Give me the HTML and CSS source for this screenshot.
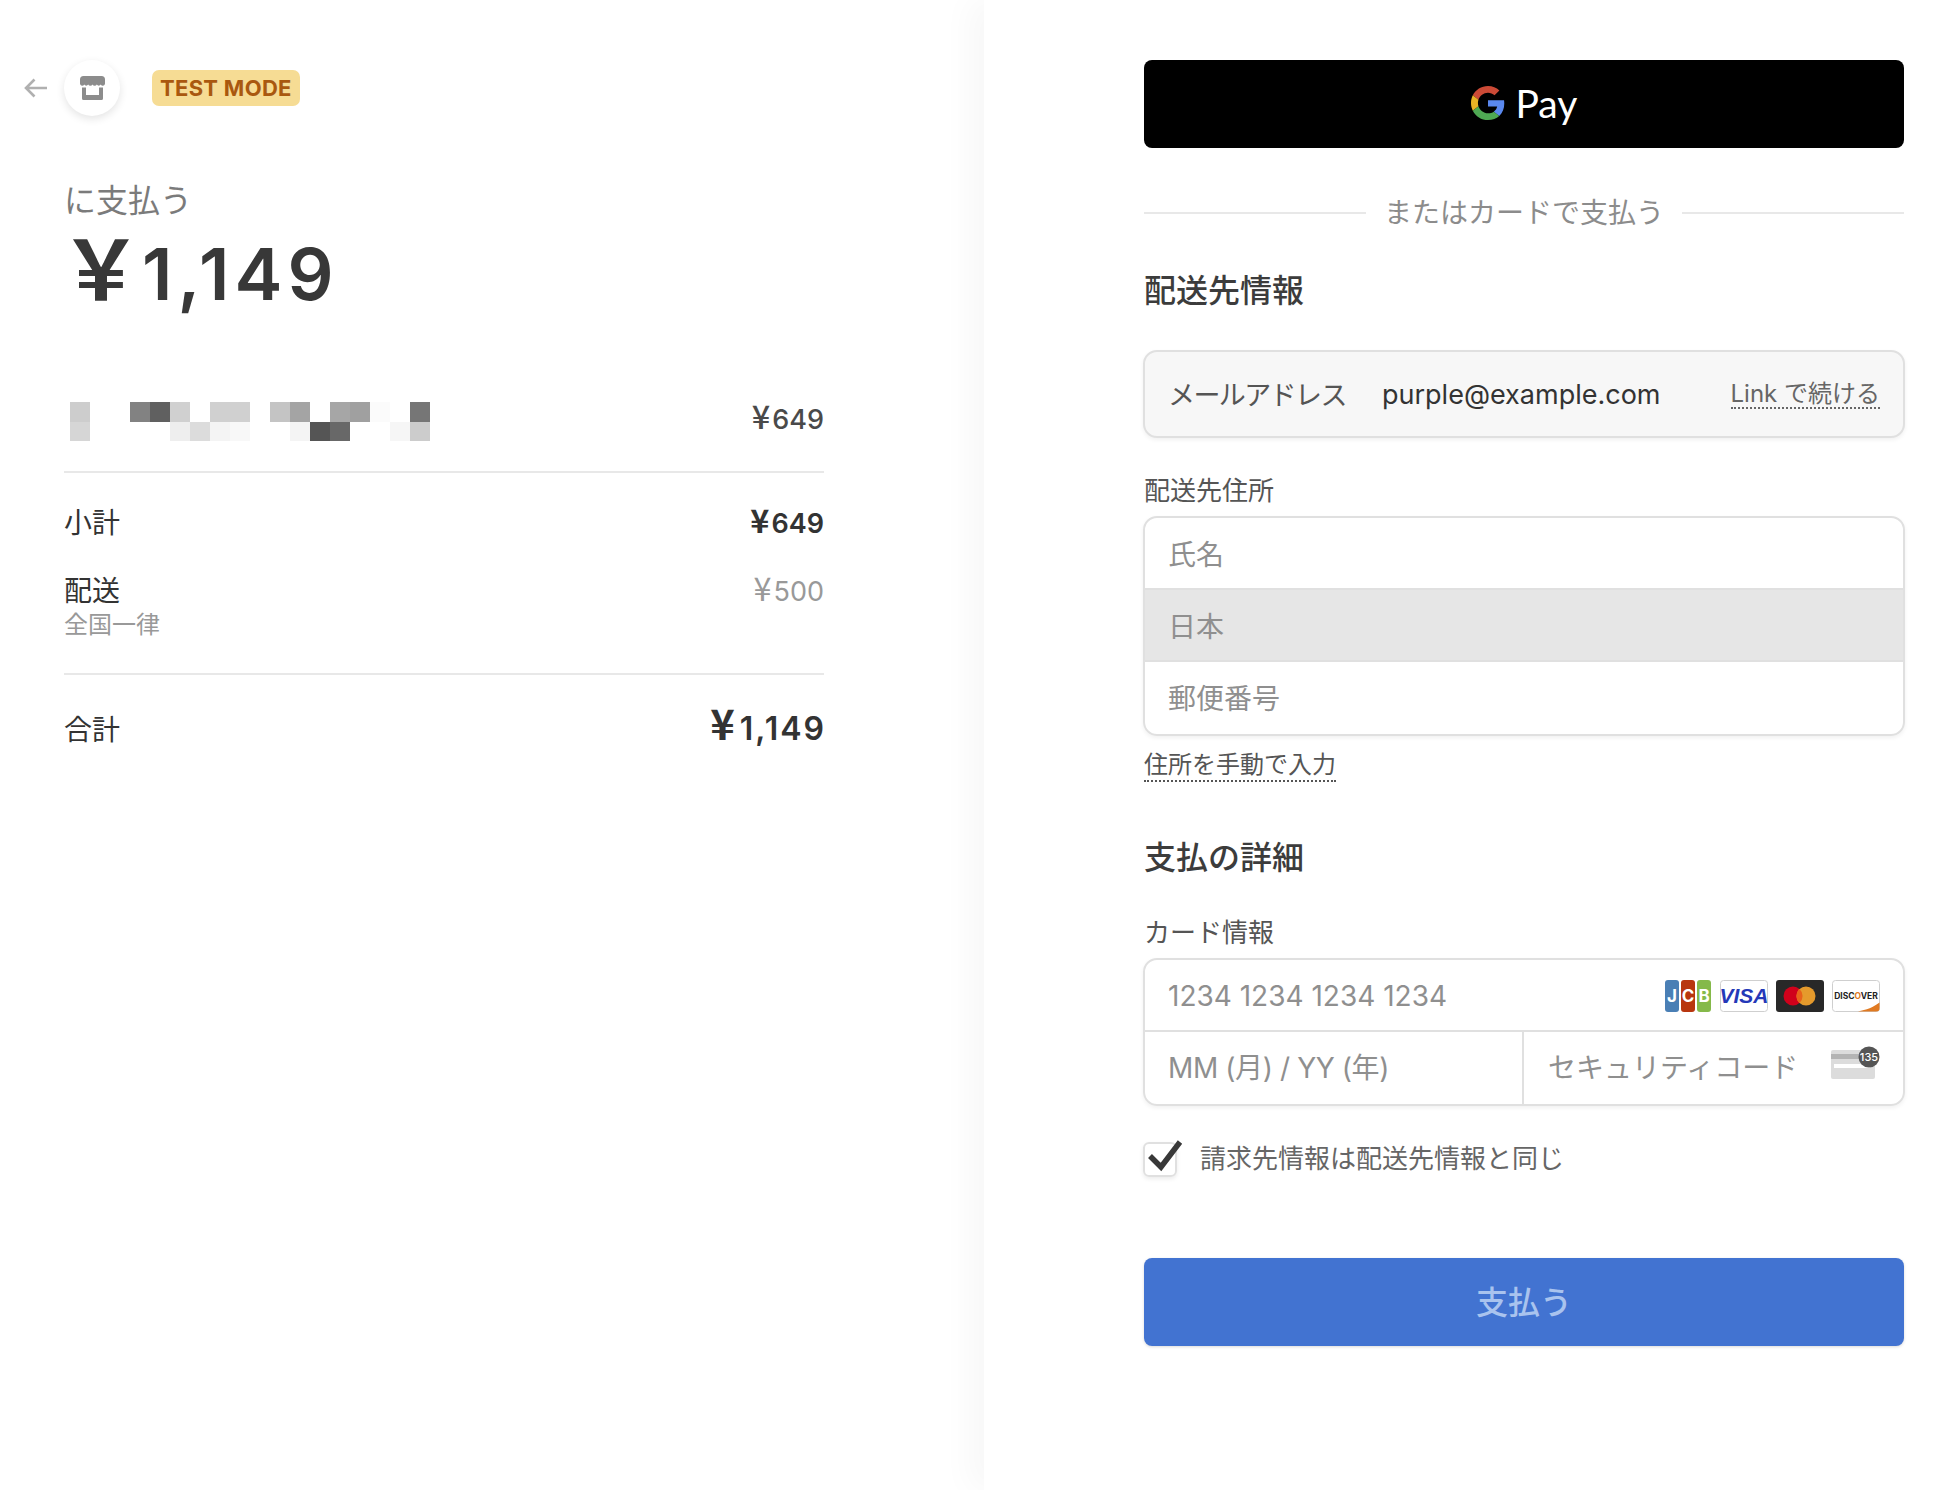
FILE: index.html
```html
<!DOCTYPE html>
<html lang="ja">
<head>
<meta charset="utf-8">
<title>支払う</title>
<link rel="stylesheet" href="styles.css">
</head>
<body>
<div class="page">
  <aside class="summary">
    <header class="topbar">
      <svg class="back" viewBox="0 0 24 20" width="24" height="20"><path d="M23 10H2M10.500 1.500 2 10l8.500 8.500" fill="none" stroke="#b0b0b0" stroke-width="2.600"/></svg>
      <div class="store">
        <svg viewBox="0 0 25 25" width="25" height="25"><path d="M3.500 0h18A3.500 3.500 0 0 1 25 3.500v4.300a2.200 2.200 0 0 1-4.200.700 2.300 2.300 0 0 1-4 0 2.400 2.400 0 0 1-4.300 0 2.400 2.400 0 0 1-4.300 0 2.300 2.300 0 0 1-4 0A2.200 2.200 0 0 1 0 7.800V3.500A3.500 3.500 0 0 1 3.500 0z" fill="#8c8c8c"/><path d="M2 11.500h4V19h13v-7.500h4v11a1.500 1.500 0 0 1-1.500 1.500h-18A1.500 1.500 0 0 1 2 22.500z" fill="#8c8c8c"/></svg>
      </div>
      <span class="badge">TEST MODE</span>
    </header>
    <div class="pay-to">に支払う</div>
    <div class="amount"><span class="yen-big">&#xFFE5;</span>1,149</div>
    <div class="item">
      <svg class="pixels" width="360" height="39" viewBox="0 0 360 39">
        <rect x="0" y="0" width="20" height="20" fill="#cdcdcd"/><rect x="60" y="0" width="20" height="20" fill="#828282"/><rect x="80" y="0" width="20" height="20" fill="#606060"/><rect x="100" y="0" width="20" height="20" fill="#d0d0d0"/><rect x="140" y="0" width="40" height="20" fill="#d0d0d0"/><rect x="200" y="0" width="20" height="20" fill="#c4c4c4"/><rect x="220" y="0" width="20" height="20" fill="#a4a4a4"/><rect x="260" y="0" width="20" height="20" fill="#a6a6a6"/><rect x="280" y="0" width="20" height="20" fill="#a0a0a0"/><rect x="300" y="0" width="20" height="20" fill="#fbfbfb"/><rect x="340" y="0" width="20" height="20" fill="#767676"/>
        <rect x="0" y="20" width="20" height="19" fill="#d6d6d6"/><rect x="100" y="20" width="20" height="19" fill="#eeeeee"/><rect x="120" y="20" width="20" height="19" fill="#dcdcdc"/><rect x="140" y="20" width="20" height="19" fill="#f4f4f4"/><rect x="160" y="20" width="20" height="19" fill="#f8f8f8"/><rect x="220" y="20" width="20" height="19" fill="#f4f4f4"/><rect x="240" y="20" width="20" height="19" fill="#555555"/><rect x="260" y="20" width="20" height="19" fill="#686868"/><rect x="320" y="20" width="20" height="19" fill="#f6f6f6"/><rect x="340" y="20" width="20" height="19" fill="#cccccc"/>
      </svg>
      <span class="item-price"><span class="yen">¥</span>649</span>
    </div>
    <div class="row subtotal"><span>小計</span><strong><span class="yen">¥</span>649</strong></div>
    <div class="row shipping">
      <div><div>配送</div><div class="ship-note">全国一律</div></div>
      <span class="ship-price"><span class="yen">¥</span>500</span>
    </div>
    <div class="row total"><span>合計</span><strong><span class="yen">¥</span>1,149</strong></div>
  </aside>

  <main class="checkout">
    <button class="gpay" type="button">
      <svg viewBox="0 0 48 48" width="34" height="34"><path fill="#CB4A36" d="M24 9.500c3.540 0 6.710 1.220 9.210 3.600l6.850-6.850C35.900 2.380 30.470 0 24 0 14.620 0 6.510 5.380 2.560 13.220l7.980 6.190C12.430 13.720 17.740 9.500 24 9.500z"/><path fill="#5A88EE" d="M46.980 24.550c0-1.570-.15-3.090-.38-4.550H24v9.020h12.940c-.58 2.960-2.260 5.480-4.780 7.180l7.730 6c4.510-4.180 7.090-10.360 7.090-17.650z"/><path fill="#E8B325" d="M10.530 28.590c-.48-1.450-.76-2.990-.76-4.590s.27-3.140.76-4.590l-7.980-6.190C.92 16.460 0 20.120 0 24c0 3.880.92 7.540 2.560 10.780l7.970-6.190z"/><path fill="#4FA853" d="M24 48c6.480 0 11.930-2.130 15.890-5.810l-7.730-6c-2.150 1.450-4.920 2.300-8.160 2.300-6.260 0-11.570-4.220-13.470-9.910l-7.980 6.190C6.510 42.620 14.620 48 24 48z"/></svg>
      <span class="gpay-text">Pay</span>
    </button>
    <div class="or"><span>またはカードで支払う</span></div>
    <h2 class="heading ship-heading">配送先情報</h2>
    <div class="email">
      <span class="email-label">メールアドレス</span>
      <span class="email-value">purple@example.com</span>
      <a class="link-continue">Link で続ける</a>
    </div>
    <div class="label addr-label">配送先住所</div>
    <div class="fieldset">
      <div class="field">氏名</div>
      <div class="field field-disabled">日本</div>
      <div class="field field-last">郵便番号</div>
    </div>
    <a class="manual">住所を手動で入力</a>
    <h2 class="heading pay-heading">支払の詳細</h2>
    <div class="label card-label">カード情報</div>
    <div class="fieldset">
      <div class="field card-number">
        <span>1234 1234 1234 1234</span>
        <div class="brands">
          <svg width="48" height="32" viewBox="0 0 48 32"><rect x="1" width="14" height="32" rx="3" fill="#4a7fb5"/><rect x="17" width="14" height="32" rx="3" fill="#b8360f"/><rect x="33" width="14" height="32" rx="3" fill="#85b94a"/><text x="8" y="22" class="jcb">J</text><text x="24" y="22" class="jcb">C</text><text x="40" y="22" class="jcb">B</text></svg>
          <svg width="48" height="32" viewBox="0 0 48 32"><rect x=".5" y=".5" width="47" height="31" rx="3" fill="#fff" stroke="#cfcfcf"/><text x="24" y="23" class="visa">VISA</text></svg>
          <svg width="48" height="32" viewBox="0 0 48 32"><rect width="48" height="32" rx="3" fill="#282828"/><circle cx="17" cy="16" r="9.500" fill="#d0011b"/><circle cx="30" cy="16" r="9.500" fill="#e59a2c"/><path d="M23.500 9a9.500 9.500 0 0 1 0 14 9.500 9.500 0 0 1 0-14z" fill="#e8611a"/></svg>
          <svg width="48" height="32" viewBox="0 0 48 32"><rect x=".5" y=".5" width="47" height="31" rx="3" fill="#fff" stroke="#cfcfcf"/><path d="M26 31.500c8-1.500 16-4.500 21.500-9v6a3 3 0 0 1-3 3z" fill="#e07a22"/><text x="24" y="18.500" class="discover">DISC<tspan class="disc-o">O</tspan>VER</text></svg>
        </div>
      </div>
      <div class="card-split">
        <div class="field expiry">MM (月) / YY (年)</div>
        <div class="field cvc">
          <span>セキュリティコード</span>
          <svg class="cvc-icon" width="48" height="32" viewBox="0 0 48 32"><rect x="0" y="0" width="44" height="29" rx="2" fill="#dcdcdc"/><rect x="0" y="4" width="44" height="5" fill="#b4b4b4"/><rect x="3" y="14" width="36" height="4" fill="#fff"/><circle cx="38" cy="7" r="10.500" fill="#555"/><text x="38" y="11" class="cvc-text">135</text></svg>
        </div>
      </div>
    </div>
    <label class="check">
      <span class="box"><svg width="40" height="38" viewBox="0 0 40 38"><path d="M7 20l11 11L37 6" fill="none" stroke="#383838" stroke-width="5.500"/></svg></span>
      <span class="check-text">請求先情報は配送先情報と同じ</span>
    </label>
    <button class="pay" type="button">支払う</button>
  </main>
</div>
</body>
</html>
```
FILE: styles.css
```css
* { box-sizing: border-box; }
html, body { margin: 0; background: #fff; }
body {
  font-family: Inter, "Noto Sans CJK JP", sans-serif;
  color: #333;
  -webkit-font-smoothing: antialiased;
}
.page { display: flex; width: 1960px; height: 1490px; overflow: hidden; }

.summary { width: 984px; padding: 0 160px 0 64px; flex: none; }
.topbar { display: flex; align-items: center; height: 112px; padding-top: 64px; margin-left: -40px; }
.back { flex: none; }
.store {
  width: 56px; height: 56px; margin-left: 16px; border-radius: 50%;
  display: flex; align-items: center; justify-content: center;
  background: #fff; box-shadow: 0 3px 9px rgba(0, 0, 0, .11);
}
.badge {
  margin-left: 32px; height: 36px; padding: 0 8px; border-radius: 7px;
  background: #f6dc94; color: #a9580f; font-size: 22px; font-weight: 700;
  line-height: 36px; letter-spacing: .3px;
}
.pay-to { margin-top: 65px; font-size: 32px; line-height: 48px; color: #7b7b7b; }
.amount { margin-top: 7px; height: 84px; font-size: 72px; line-height: 84px; font-weight: 600; color: #383838; letter-spacing: 5px; }
.yen-big { font-size: 82px; line-height: 0; font-weight: 700; letter-spacing: 0; margin-left: -4px; }
.yen { font-family: "Noto Sans CJK JP", sans-serif; font-size: 1.2em; line-height: 0; letter-spacing: 0; margin-right: 2px; }
.item { display: flex; justify-content: space-between; align-items: flex-start; margin-top: 86px; height: 69px; padding-left: 6px; border-bottom: 2px solid #e8e8e8; box-sizing: content-box; }
.pixels { flex: none; }
.item-price { height: 35px; padding-top: 1px; font-size: 27px; line-height: 34px; font-weight: 500; color: #4a4a4a; }
.row { display: flex; justify-content: space-between; font-size: 28px; color: #333; }
.row strong { font-weight: 600; font-size: 27px; padding-top: 1px; }
.subtotal { margin-top: 32px; height: 36px; line-height: 36px; }
.shipping { margin-top: 32px; line-height: 36px; height: 100px; border-bottom: 2px solid #e8e8e8; box-sizing: content-box; }
.ship-note { font-size: 24px; line-height: 32px; color: #999; }
.ship-price { height: 36px; padding-top: 1px; font-size: 27px; color: #999; }
.total { margin-top: 36px; height: 38px; line-height: 38px; }
.row.total strong { font-size: 32px; letter-spacing: 2px; margin-right: -2px; padding-top: 0; line-height: 36px; }
.total .yen { font-size: 1.3em; margin-right: 5px; letter-spacing: 0; }

.checkout { flex: 1; padding: 60px 56px 0 160px; box-shadow: -15px 0 30px rgba(0, 0, 0, .03); }
.gpay {
  display: flex; align-items: center; justify-content: center; gap: 11px;
  width: 760px; height: 88px; border: 0; border-radius: 8px; background: #000; padding: 0 0 3px;
}
.gpay-text { font-family: Lato, sans-serif; color: #fff; font-size: 39px; line-height: 50px; }
.or { display: flex; align-items: center; gap: 18px; width: 760px; margin-top: 49px; height: 32px; color: #8c8c8c; font-size: 28px; line-height: 30px; }
.or::before, .or::after { content: ""; flex: 1; height: 2px; background: #e8e8e8; }
.heading { margin: 0; font-size: 32px; font-weight: 500; line-height: 40px; color: #3c3c3c; }
.ship-heading { margin-top: 42px; }
.email {
  display: flex; align-items: center; width: 762px; height: 88px; margin: 39px 0 0 -1px; padding: 0 23px;
  border: 2px solid #e0e0e0; border-radius: 14px; background: #f7f7f7;
  box-shadow: 0 2px 4px rgba(0, 0, 0, .06); font-size: 27px; color: #333;
}
.email-label { width: 214px; padding-bottom: 2px; color: #555; font-size: 27px; letter-spacing: -1.600px; }
.email-value { flex: 1; }
.link-continue { font-size: 24px; color: #666; border-bottom: 2px dotted #666; line-height: 27px; }
.label { font-size: 26px; line-height: 32px; color: #555; }
.addr-label { margin-top: 37px; }
.fieldset {
  width: 762px; margin: 9px 0 0 -1px; border: 2px solid #e0e0e0; border-radius: 14px; overflow: hidden;
  box-shadow: 0 2px 4px rgba(0, 0, 0, .06);
}
.field { height: 72px; padding: 0 23px; display: flex; align-items: center; font-size: 28px; color: #8f8f8f; border-top: 2px solid #e0e0e0; }
.field:first-child { border-top: 0; height: 70px; }
.field-last { height: 74px; padding-bottom: 2px; }
.field-disabled { background: #e6e6e6; }
.manual { display: inline-block; margin-top: 14px; font-size: 24px; line-height: 30px; color: #555; border-bottom: 2px dotted #555; }
.pay-heading { margin-top: 56px; }
.card-label { margin-top: 39px; }
.card-number { justify-content: space-between; padding-top: 2px; }
.brands { display: flex; gap: 8px; }
.jcb { font: 700 17px Inter, sans-serif; fill: #fff; text-anchor: middle; }
.visa { font: italic 700 21px "Liberation Sans", sans-serif; fill: #2438b8; text-anchor: middle; }
.discover { font: 700 8.500px Inter, sans-serif; fill: #222; text-anchor: middle; }
.disc-o { fill: #e07a22; }
.card-split { display: flex; }
.expiry { width: 377px; flex: none; letter-spacing: -.4px; }
.card-split .field { height: 74px; padding-bottom: 4px; border-top: 2px solid #e0e0e0; }
.cvc { flex: 1; justify-content: space-between; padding-left: 24px; border-left: 2px solid #e0e0e0; }
.cvc-icon { overflow: visible; margin-right: 1px; }
.cvc-text { font: 500 11px Inter, sans-serif; fill: #fff; text-anchor: middle; }
.check { display: flex; align-items: center; gap: 23px; margin-top: 31px; margin-left: -1px; font-size: 26px; color: #666; }
.check-text { padding-bottom: 1px; }
.box { position: relative; flex: none; width: 34px; height: 35px; margin-top: 5px; border: 2px solid #e0e0e0; border-radius: 6px; box-shadow: 0 2px 4px rgba(0, 0, 0, .08); }
.box svg { position: absolute; left: -2px; top: -8px; overflow: visible; }
.pay {
  display: block; width: 760px; height: 88px; margin-top: 81px; padding-bottom: 6px; border: 0; border-radius: 8px;
  background: #4273d1; color: #a9c3ee; font: 500 32px Inter, "Noto Sans CJK JP", sans-serif;
  box-shadow: 0 1px 3px rgba(0, 0, 0, .15);
}
```
